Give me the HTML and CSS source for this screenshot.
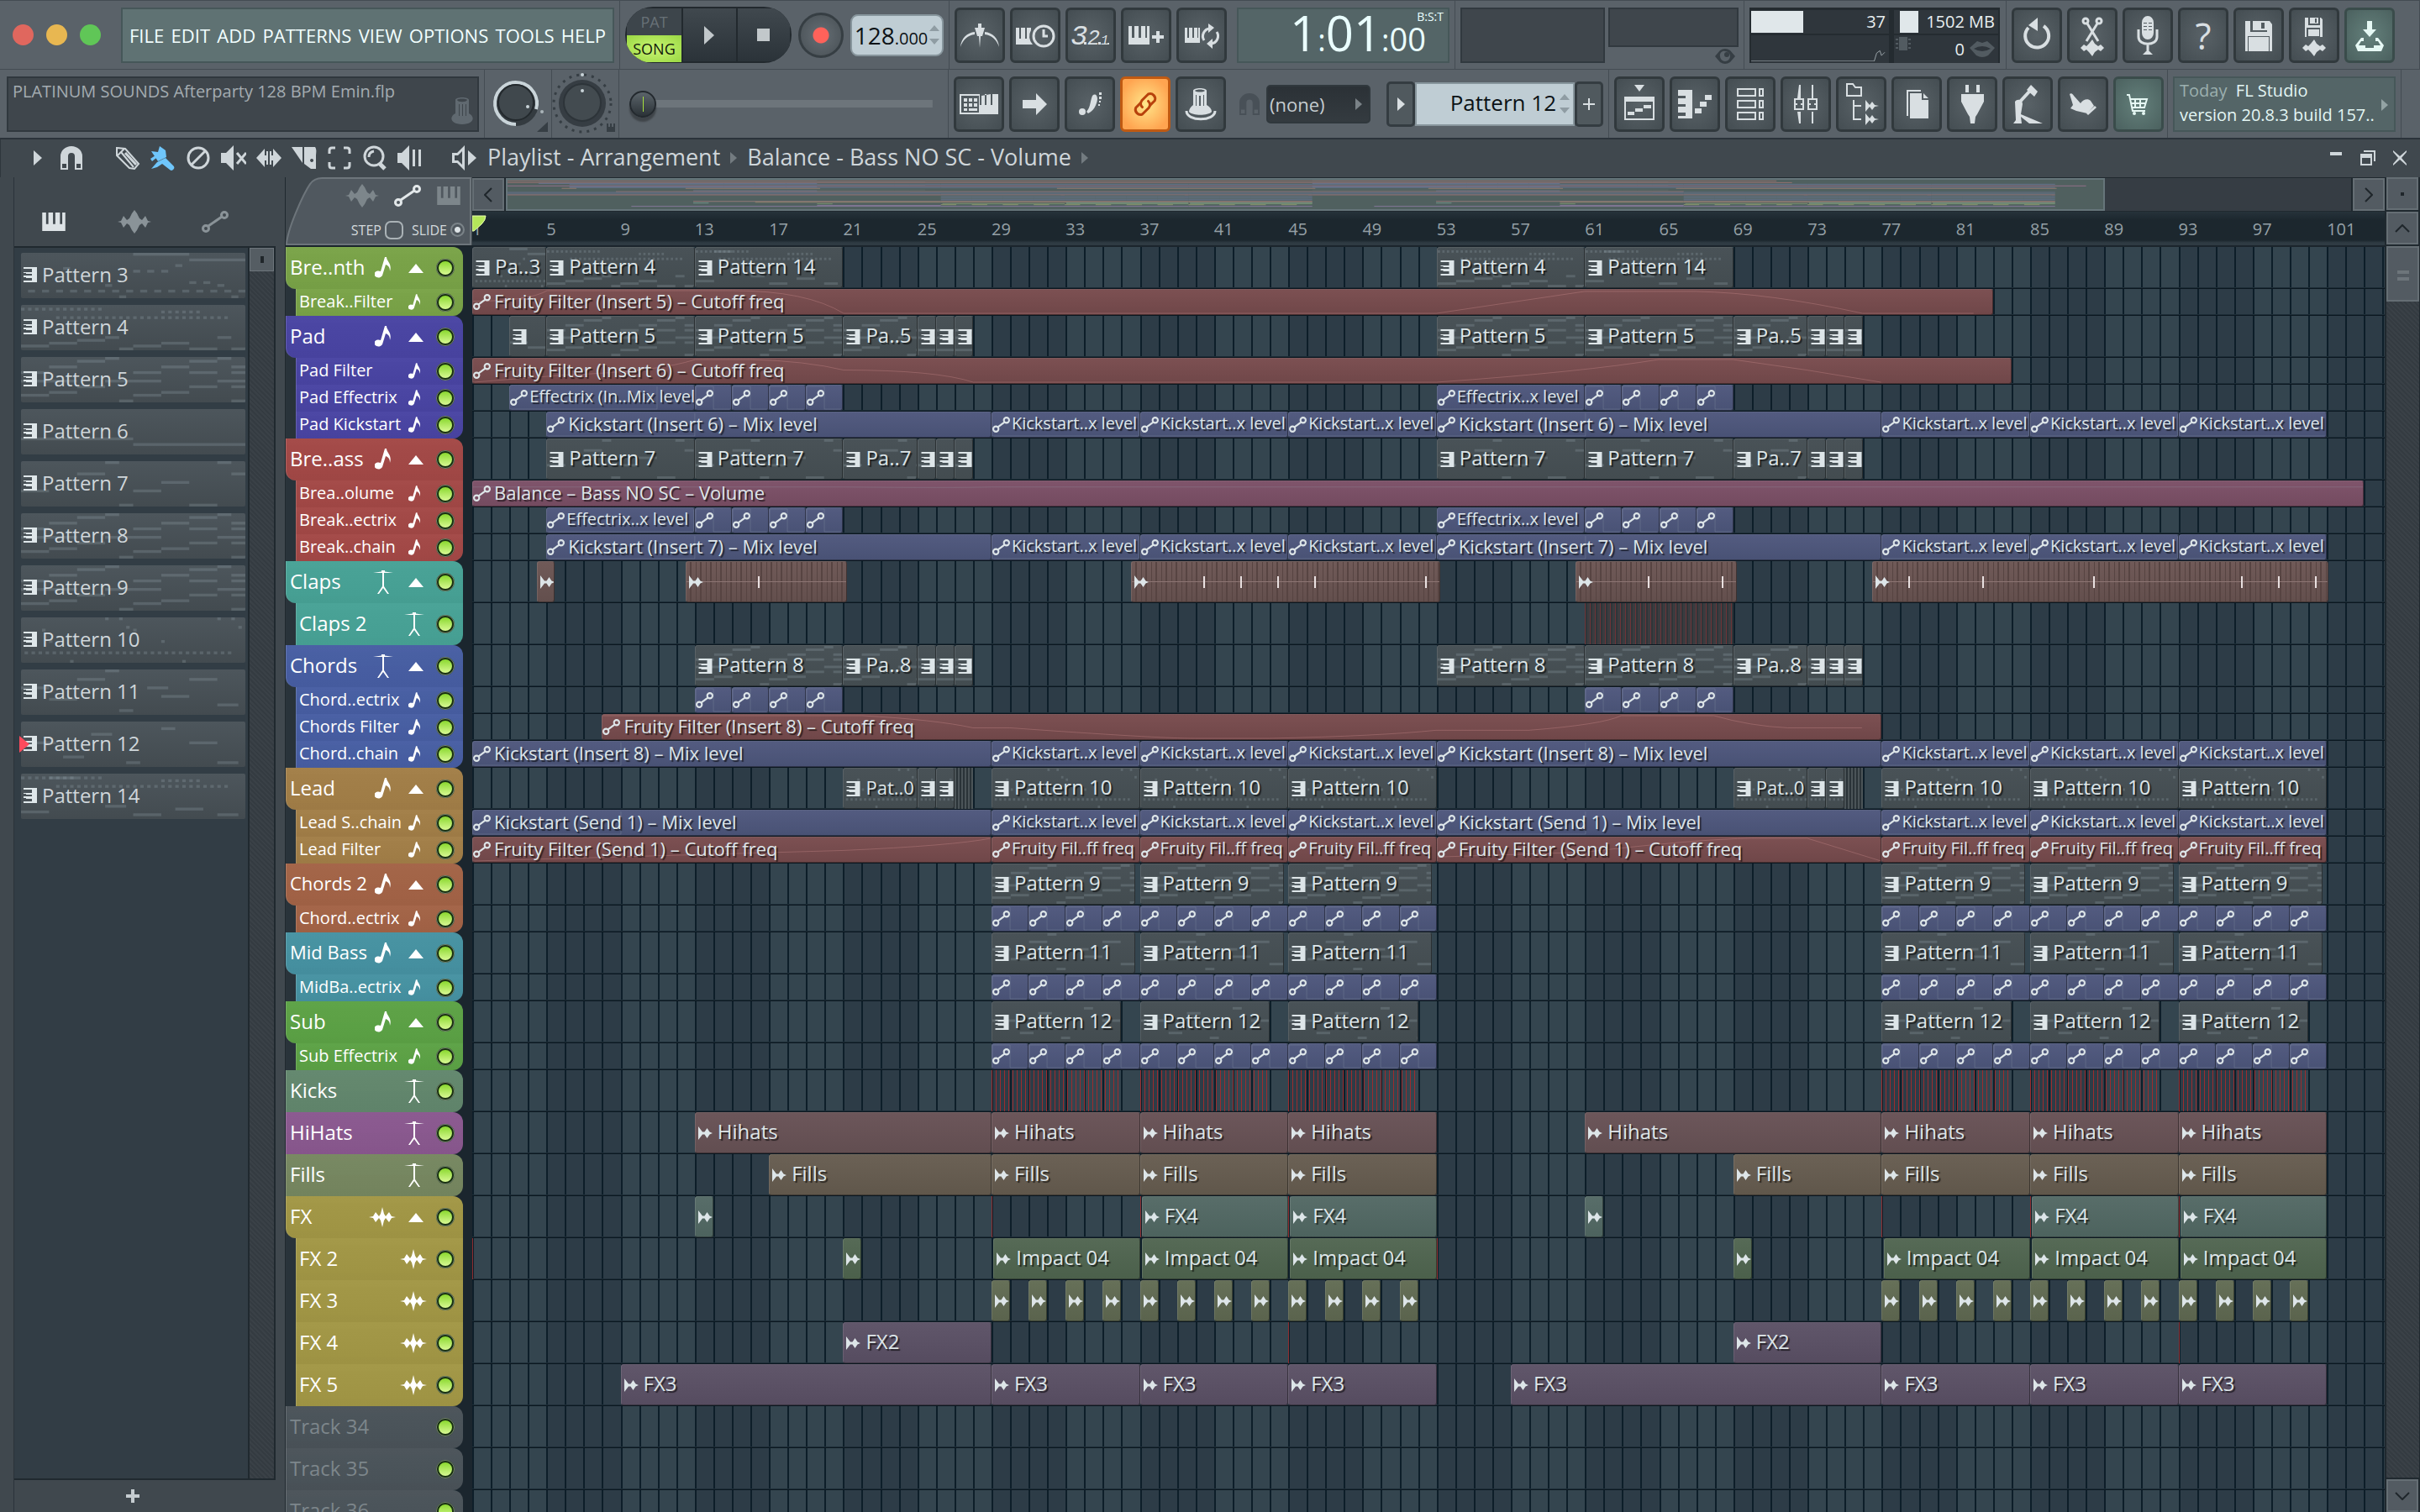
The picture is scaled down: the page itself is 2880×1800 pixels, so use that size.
FILE: index.html
```html
<!DOCTYPE html>
<html lang="en">
<head>
	<meta charset="UTF-8">
	<title>Playlist - Arrangement</title>
	<link rel="stylesheet" href="styles.css">
</head>
<body>
	<svg class="sprite" aria-hidden="true">
		<symbol id="piano" viewBox="0 0 30 24"><path d="M0 0h5v15h3V0h6v15h3V0h6v15h3V0h4v24H0z"/></symbol>
		<symbol id="keys" viewBox="0 0 16 18"><path d="M0 0h16v18H0v-2h10v-3H3v-1H0v-2h10V8H3V7H0V6h10V2H0z"/></symbol>
		<symbol id="wave" viewBox="0 0 40 28"><path d="M0 14l4-1 3-6 4 5 3-2 3-6 3-4 3 4 3 6 3 2 4-5 3 6 4 1-4 1-3 6-4-5-3 2-3 6-3 4-3-4-3-6-3-2-4 5-3-6z"/></symbol>
		<symbol id="sample" viewBox="0 0 17 16"><path d="M0 0l5 6.500h2.500L10.500 2l3 4.500 3.500 1.500-3.500 1.500-3 4.500-3-4.500H5L0 16z"/></symbol>
		<symbol id="spark" viewBox="0 0 32 24"><path d="M0 12l5-1 3-5 4 5 2-3 2-8 2 8 2 3 4-5 3 5 5 1-5 1-3 5-4-5-2 3-2 8-2-8-2-3-4 5-3-5z"/></symbol>
		<symbol id="auto" viewBox="0 0 32 28"><g fill="none" stroke="currentColor" stroke-width="3"><circle cx="5" cy="22" r="3.500"/><circle cx="27" cy="6" r="3.500"/><path d="M8 19L24 8"/></g></symbol>
		<symbol id="autoclip" viewBox="0 0 20 20"><g fill="none" stroke="currentColor" stroke-width="2"><circle cx="4" cy="15" r="3"/><circle cx="16" cy="5" r="3"/><path d="M6 13l8-6"/></g></symbol>
		<symbol id="note" viewBox="0 0 20 26"><path d="M12 0h2c0 5 7 8 4 17 0-5-2-7-5-8l-4 13a5 4 0 1 1-2-5z"/></symbol>
		<symbol id="drum" viewBox="0 0 24 28"><path d="M0 3l10-1.500V0h4v1.500L24 3H13v16l6 9h-2l-5-7-5 7H5l6-9V3z"/></symbol>
		<symbol id="magnet" viewBox="0 0 26 28"><path fill-rule="evenodd" d="M0 28V12a13 12 0 0 1 26 0v16h-9V12a4 4 0 0 0-8 0v16zm2-7v5h5v-5zm17 0v5h5v-5z"/></symbol>

		<symbol id="metronome" viewBox="0 0 60 66"><path d="M7 47c1-11 8-17 17-18v3C16 33 10 38 7 47zm46 0c-1-11-8-17-17-18v3c8 1 14 6 17 15zM24 24h4v-5h4v5h4l-3 10h-2l-1 14-1-14h-2z"/></symbol>
		<symbol id="wait" viewBox="0 0 60 66"><path d="M7 24h4v13h2V24h5v13h2V24h5v3a14 14 0 0 0 2 17H7z"/><g fill="none" stroke="currentColor" stroke-width="3"><circle cx="40" cy="34" r="12"/><path d="M40 26v8h5"/></g></symbol>
		<symbol id="count" viewBox="0 0 60 66"><g font-family="Liberation Mono, monospace" font-style="italic"><text x="6" y="44" font-size="34">3</text><text x="26" y="44" font-size="25">2</text><text x="42" y="44" font-size="16">1</text></g><path d="M22 41h3v3h-3zM39 41h3v3h-3zM50 42h2v2h-2z"/></symbol>
		<symbol id="stepedit" viewBox="0 0 60 66"><path d="M9 22h4v14h3V22h5v14h3V22h5v14h2V22h3v22H9zM42 28h4v5h5v4h-5v5h-4v-5h-5v-4h5z"/></symbol>
		<symbol id="loop" viewBox="0 0 60 66"><path d="M10 24h3v12h2V24h4v12h2V24h4v12h1V24h2v18H10z"/><path fill="none" stroke="currentColor" stroke-width="3" d="M33 39a9 9 0 0 1 7-14M48 29a9 9 0 0 1-7 14"/><path d="M38 19l7 5-7 6zM43 37l-7 6 7 6z"/></symbol>
		<symbol id="typing" viewBox="0 0 60 66"><path fill-rule="evenodd" d="M7 21h46v24H7zm2 2v20h21V23zm24 0v11h-2V21h8v13h-2V21h9v13h-2V21z"/><path d="M12 26h4v4h-4zm6 0h4v4h-4zm6 0h4v4h-4zM12 32h4v4h-4zm6 0h4v4h-4zm6 0h4v4h-4zM12 38h4v3h-4zm6 0h10v3H18z"/></symbol>
		<symbol id="arrow" viewBox="0 0 60 66"><path d="M16 28h16v-8l13 13-13 13v-8H16z"/></symbol>
		<symbol id="foot" viewBox="0 0 60 66"><circle cx="21" cy="42" r="4"/><path d="M33 23c3-3 6-1 6 4-1 8-5 14-11 17l-2-2c5-6 4-11 7-19z"/><path d="M41 19h3v3h-3zM41 24h3v3h-3zM41 29h2v2h-2zM40 33h2v2h-2z"/></symbol>
		<symbol id="link" viewBox="0 0 60 66"><g fill="none" stroke="currentColor" stroke-width="3" stroke-linecap="round" transform="rotate(-45 30 33)"><path d="M27 28h-8a6 6 0 0 0 0 11h11a6 6 0 0 0 5-6"/><path d="M33 38h8a6 6 0 0 0 0-11H30a6 6 0 0 0-5 6"/></g></symbol>
		<symbol id="knobcap" viewBox="0 0 60 66"><path fill-rule="evenodd" d="M21 17c0-4 16-4 16 0v17c4 2 6 5 6 8-4 5-23 5-27 0 0-3 2-6 5-8zm2 0c2 2 10 2 12 0-2-2-10-2-12 0zm1 5v13h1V22zm4 1v12h2V23zm5-1v13h1V22z"/><path fill="none" stroke="currentColor" stroke-width="3" d="M13 41c0 13 34 13 34 0"/></symbol>
		<symbol id="playlist" viewBox="0 0 60 66"><path d="M24 10h12l-6 8z"/><path fill-rule="evenodd" d="M12 24h36v28H12zm2 6v20h32V30z"/><path d="M16 42h8v4h-8zM25 38h9v4h-9zM35 34h9v4h-9z"/></symbol>
		<symbol id="roll" viewBox="0 0 60 66"><path d="M10 16h17v34H10v-3h9v-4h-9v-7h9v-3h-9v-7h9v-3h-9zM30 38h8v6h-8zM36 30h8v6h-8zM42 22h8v6h-8z"/></symbol>
		<symbol id="rack" viewBox="0 0 60 66"><g fill="none" stroke="currentColor" stroke-width="2"><path d="M15 15h21v8H15zM41 15h4v8h-4zM15 29h21v8H15zM41 29h4v8h-4zM15 43h21v8H15zM41 43h4v8h-4z"/></g></symbol>
		<symbol id="mixer" viewBox="0 0 60 66"><path d="M22 10h2v16h-4zM20 42h4v14h-2zM37 10h2v16h-2zM37 42h2v14h-2z"/><path fill="none" stroke="currentColor" stroke-width="2" d="M17 27h10v12H17zM33 27h10v12H33zM17 33h3m4 0h3m6 0h3m4 0h3"/></symbol>
		<symbol id="browser" viewBox="0 0 60 66"><path fill="none" stroke="currentColor" stroke-width="2" d="M13 9h7l3 4h7v10H13zM21 28v23h9M21 35h9"/><path d="M35 28l5 6 3-4 3 4 5 1-5 1-3 4-3-4-5 6zM35 44l5 6 3-4 3 4 5 1-5 1-3 4-3-4-5 6z"/></symbol>
		<symbol id="copy" viewBox="0 0 60 66"><path d="M22 20h14v8h8v22H22zM38 20l6 6h-6z"/><path fill="none" stroke="currentColor" stroke-width="2" d="M35 17H19v30"/></symbol>
		<symbol id="plug" viewBox="0 0 60 66"><path d="M22 10h4v9h-4zM35 10h4v9h-4zM17 21h27v9l-8 15-2 3-1 8h-5l-1-8-2-3-8-15z"/></symbol>
		<symbol id="hammer" viewBox="0 0 60 66"><path d="M34 10l8 8-4 6-9-8z"/><path fill="none" stroke="currentColor" stroke-width="4" d="M32 18L21 30"/><path d="M15 30c3-4 9-2 9 3l-2 12 26 11H32L22 48l1 8H13l3-4z"/></symbol>
		<symbol id="hand" viewBox="0 0 60 66"><path d="M14 21c2-2 4 0 5 2l8 9c3-5 9-6 12-3l4 6-8 9-13-3-7-3 3-4z"/><path fill="none" stroke="currentColor" stroke-width="3" d="M45 36l-10 9"/></symbol>
		<symbol id="cart" viewBox="0 0 60 66"><path fill="none" stroke="currentColor" stroke-width="2" d="M16 22h3l4 19h15M20 27h20l-3 10H22M21 32h18M26 27v10M32 27v10"/><circle cx="25" cy="44" r="2"/><circle cx="36" cy="44" r="2"/></symbol>
		<symbol id="undo" viewBox="0 0 60 66"><path fill="none" stroke="currentColor" stroke-width="4" d="M20 24a14 14 0 1 0 18-2"/><path d="M31 12v16l-11-7z"/></symbol>
		<symbol id="scissors" viewBox="0 0 60 66"><g fill="none" stroke="currentColor" stroke-width="3"><circle cx="22" cy="16" r="3"/><circle cx="38" cy="16" r="3"/><path d="M24 19l13 21M36 19L23 40"/></g><path d="M16 48l4-4 3 2 3-3 4-5 3 5 4 3 3-2 4 4-4 4-3-2-4 3-3 5-4-5-3-3-3 2z"/></symbol>
		<symbol id="mic" viewBox="0 0 60 66"><path fill-rule="evenodd" d="M23 18a7 8 0 0 1 14 0v12a7 8 0 0 1-14 0zm2 0v1h4v-1zm6 0v1h4v-1zm-6 4v1h4v-1zm6 0v1h4v-1zm-6 4v1h4v-1zm6 0v1h4v-1z"/><path fill="none" stroke="currentColor" stroke-width="3" d="M19 26v9c0 11 22 11 22 0v-9M30 43v10"/><path d="M24 56l4-4h4l4 4z"/></symbol>
		<symbol id="save" viewBox="0 0 60 66"><path fill-rule="evenodd" d="M14 16h6v13h20V16h3l3 4v32H14zm3 18v18h26V34zM23 16h17v11H23zm10 2v7h4v-7z"/><path d="M18 35h24v17H18z"/></symbol>
		<symbol id="savewave" viewBox="0 0 60 66"><path fill-rule="evenodd" d="M19 12h4v9h14v-9h1l2 2v21H19zm2 12v11h16V24zM25 12h10v7H25zm6 1v5h2v-5z"/><path d="M23 26h13v8H23zM16 48l4-4 3 2 3-3 4-5 3 5 4 3 3-2 4 4-4 4-3-2-4 3-3 5-4-5-3-3-3 2z"/></symbol>
		<symbol id="download" viewBox="0 0 60 66"><path d="M27 16h6v10h5l-8 9-8-9h5zM13 45l7-9h3v4h-3l-3 5h8v3h10v-3h8l-3-5h-3v-4h3l7 9-3 7H16z"/></symbol>
	</svg>

	<header class="toolbar">
		<div class="bar">
			<div class="cell cell-main">
				<div class="lights"><i class="light red"></i><i class="light yellow"></i><i class="light green"></i></div>
				<nav class="menu">
					<button>FILE</button><button>EDIT</button><button>ADD</button><button>PATTERNS</button><button>VIEW</button><button>OPTIONS</button><button>TOOLS</button><button>HELP</button>
				</nav>
			</div>
			<div class="cell cell-transport">
				<div class="transport">
					<div class="mode"><button class="pat">PAT</button><button class="song">SONG</button></div>
					<button class="key" aria-label="Play"><svg width="12" height="22" viewBox="0 0 12 22"><path d="M0 0l12 11L0 22z"/></svg></button>
					<button class="key last" aria-label="Stop"><svg width="15" height="15" viewBox="0 0 15 15"><path d="M0 0h15v15H0z"/></svg></button>
				</div>
				<button class="record" aria-label="Record"></button>
				<button class="tempo"><span>128<small>.000</small></span><svg class="updown" viewBox="0 0 12 24"><path d="M0 7l6-7 6 7zM0 16h12l-6 7z"/></svg></button>
			</div>
			<div class="cell cell-time">
				<button class="tool" aria-label="Metronome"><svg><use href="#metronome"/></svg></button>
				<button class="tool" aria-label="Wait for input"><svg><use href="#wait"/></svg></button>
				<button class="tool" aria-label="Countdown"><svg><use href="#count"/></svg></button>
				<button class="tool" aria-label="Step edit"><svg><use href="#stepedit"/></svg></button>
				<button class="tool" aria-label="Loop recording"><svg><use href="#loop"/></svg></button>
				<div class="clock"><span class="digits">1<i>:</i>01<i>:</i><small>00</small></span><span class="unit">B:S:T</span></div>
			</div>
			<div class="cell cell-scope">
				<div class="scope wide"></div>
				<div class="scope-side">
					<div class="scope"></div>
					<svg class="eye" viewBox="0 0 24 18"><path fill-rule="evenodd" d="M0 9l6-7q6-4 12 0l6 7-6 7q-6 4-12 0zm6 0a6 6 0 0 0 12 0 6 6 0 0 0-6-6 5 5 0 0 0-6 6z"/><circle cx="14" cy="7" r="3"/></svg>
				</div>
			</div>
			<div class="cell cell-cpu">
				<div class="meter">
					<div class="load"><span class="fill"></span><b>37</b></div>
					<div class="graph"><svg viewBox="0 0 166 32"><path d="M0 31h152l3-10 4-3 2 6 4-4" fill="none" stroke="#9ca6ab"/></svg></div>
				</div>
				<div class="meter memory">
					<div class="load"><span class="fill small"></span><b>1502 MB</b></div>
					<div class="voices"><svg class="chip" viewBox="0 0 18 16"><path d="M4 0h10v16H4zM0 2h3v2H0zM0 7h3v2H0zM0 12h3v2H0zM15 2h3v2h-3zM15 7h3v2h-3zM15 12h3v2h-3z"/></svg><b>0</b><svg class="lips" viewBox="0 0 30 20"><path fill-rule="evenodd" d="M0 9l9-8 6 2 6-2 9 8-8 9q-7 4-14 0zm5 1q10-6 20 0-10 6-20 0z"/></svg></div>
				</div>
			</div>
			<div class="cell cell-files">
				<button class="tool" aria-label="Undo"><svg><use href="#undo"/></svg></button>
				<button class="tool" aria-label="Cut"><svg><use href="#scissors"/></svg></button>
				<button class="tool" aria-label="Record audio"><svg><use href="#mic"/></svg></button>
				<button class="tool help" aria-label="Help">?</button>
				<button class="tool" aria-label="Save"><svg><use href="#save"/></svg></button>
				<button class="tool" aria-label="Render"><svg><use href="#savewave"/></svg></button>
				<button class="tool teal" aria-label="Download"><svg><use href="#download"/></svg></button>
			</div>
		</div>
		<div class="bar">
			<div class="cell cell-hint">
				<div class="hint">PLATINUM SOUNDS Afterparty 128 BPM Emin.flp<svg class="hint-knob" viewBox="0 0 26 32"><path fill-rule="evenodd" d="M5 3c0-4 16-4 16 0v16c8 4 6 13-8 13S-3 23 5 19zm2 0c1 3 11 3 12 0-1-2-11-2-12 0zm2 5v14h1V8zm4 0v14h1V8zm4 0v14h1V8z"/></svg></div>
			</div>
			<div class="cell cell-knob">
				<svg class="knob" viewBox="0 0 80 81" role="img" aria-label="Main volume"><circle cx="37" cy="40" r="27" fill="#343b40"/><path d="M37 65A25 25 0 1 1 61 47" fill="none" stroke="#c9d4d9" stroke-width="4"/><circle cx="37" cy="39" r="21" fill="#40484d" stroke="#23292d" stroke-width="2"/><circle cx="51" cy="44" r="2" fill="#c9d4d9"/><circle cx="68" cy="50" r="2" fill="#aab4b9"/><path d="M75 62v12H62z" fill="#363e44"/></svg>
			</div>
			<div class="cell cell-knob">
				<svg class="knob" viewBox="0 0 80 81" role="img" aria-label="Main pitch"><circle cx="36" cy="40" r="34" fill="none" stroke="#363e44" stroke-width="3" stroke-dasharray="3 6"/><circle cx="36" cy="40" r="28" fill="#363d43"/><circle cx="36" cy="39" r="22" fill="#434b50" stroke="#2d3439" stroke-width="2"/><circle cx="36" cy="25" r="2" fill="#c9d4d9"/><circle cx="36" cy="6" r="2" fill="#c9d4d9"/><path d="M65 64h2v4h2v-4h2v4h2v-4h2v10H65z" fill="#363e44"/></svg>
			</div>
			<div class="cell cell-slide">
				<input type="range" class="position" min="0" max="100" value="0" aria-label="Song position">
			</div>
			<div class="cell cell-pattern">
				<button class="tool" aria-label="Typing keyboard"><svg><use href="#typing"/></svg></button>
				<button class="tool" aria-label="Step"><svg><use href="#arrow"/></svg></button>
				<button class="tool" aria-label="Footprint"><svg><use href="#foot"/></svg></button>
				<button class="tool hot" aria-label="Multilink"><svg><use href="#link"/></svg></button>
				<button class="tool" aria-label="Knob"><svg><use href="#knobcap"/></svg></button>
				<svg class="snap-icon"><use href="#magnet"/></svg>
				<label class="snap"><select aria-label="Snap"><option>(none)</option></select><svg width="8" height="14" viewBox="0 0 8 14"><path d="M0 0l8 7-8 7z"/></svg></label>
				<div class="picker">
					<button class="mini" aria-label="Previous pattern"><svg width="9" height="16" viewBox="0 0 9 16"><path d="M0 0l9 8-9 8z"/></svg></button>
					<label class="pattern-box"><input type="text" value="Pattern 12" aria-label="Pattern"><svg class="updown" viewBox="0 0 12 24"><path d="M0 7l6-7 6 7zM0 16h12l-6 7z"/></svg></label>
					<button class="mini" aria-label="New pattern"><svg width="14" height="14" viewBox="0 0 14 14"><path d="M6 0h2v6h6v2H8v6H6V8H0V6h6z"/></svg></button>
				</div>
			</div>
			<div class="cell cell-windows">
				<button class="tool" aria-label="Playlist"><svg><use href="#playlist"/></svg></button>
				<button class="tool" aria-label="Piano roll"><svg><use href="#roll"/></svg></button>
				<button class="tool" aria-label="Channel rack"><svg><use href="#rack"/></svg></button>
				<button class="tool" aria-label="Mixer"><svg><use href="#mixer"/></svg></button>
				<button class="tool" aria-label="Browser"><svg><use href="#browser"/></svg></button>
				<button class="tool" aria-label="Project picker"><svg><use href="#copy"/></svg></button>
				<button class="tool" aria-label="Plugins"><svg><use href="#plug"/></svg></button>
				<button class="tool" aria-label="Tempo tapper"><svg><use href="#hammer"/></svg></button>
				<button class="tool" aria-label="Touch"><svg><use href="#hand"/></svg></button>
				<button class="tool teal" aria-label="Shop"><svg><use href="#cart"/></svg></button>
			</div>
			<div class="cell cell-news">
				<a class="news" href="#"><span><em>Today</em>&nbsp; FL Studio</span><span>version 20.8.3 build 157..</span><svg class="news-next" width="8" height="14" viewBox="0 0 8 14"><path d="M0 0l8 7-8 7z"/></svg></a>
			</div>
			<div class="cell cell-end"></div>
		</div>
	</header>

	<main class="window">
		<div class="titlebar">
			<div class="title-tools">
				<button aria-label="Options"><svg width="10" height="18" viewBox="0 0 10 18"><path d="M0 0l10 9-10 9z"/></svg></button>
				<button aria-label="Snap"><svg width="26" height="28"><use href="#magnet"/></svg></button>
			</div>
			<div class="edit-tools">
				<button aria-label="Draw"><svg viewBox="0 0 30 30"><g fill="none" stroke="currentColor" stroke-width="2"><path d="M2 3l10 1 16 18-5 6-6-1L2 12zM3 12l8-8M7 8l15 18"/><path stroke-width="3" d="M12 9l13 14"/></g></svg></button>
				<button class="active" aria-label="Paint"><svg viewBox="0 0 30 30"><path d="M1 7l8 1 2-7 7 5 1 8-10 5zM8 20l10-5 9 9a3 3 0 0 1-4 5l-9-7-6 4-7 2zM0 16l6-4 1 3-5 4z"/></svg></button>
				<button aria-label="Delete"><svg viewBox="0 0 30 30"><g fill="none" stroke="currentColor" stroke-width="3"><circle cx="15" cy="15" r="12"/><path d="M23 7L7 23"/></g></svg></button>
				<button aria-label="Mute"><svg viewBox="0 0 30 30"><path d="M0 9h6l9-9v30l-9-9H0z"/><path d="M19 9l11 13M30 9L19 22" fill="none" stroke="currentColor" stroke-width="3"/></svg></button>
				<button aria-label="Slip"><svg viewBox="0 0 30 30"><path d="M0 15L10 4v8h2V7h2v16h-2v-5h-2v8zm30 0L20 4v8h-2V7h-2v16h2v-5h2v8z"/></svg></button>
				<button aria-label="Slice"><svg viewBox="0 0 30 30"><path fill-rule="evenodd" d="M0 2h13v19zm15 0h13q2 2 1 10v16h-6l-8-6zm9 14a2 2 0 1 0 .1 0z"/></svg></button>
				<button aria-label="Select"><svg viewBox="0 0 30 30"><path fill="none" stroke="currentColor" stroke-width="3" d="M3 10V6q0-3 3-3h4M20 3h4q3 0 3 3v4M27 20v4q0 3-3 3h-4M10 27H6q-3 0-3-3v-4"/></svg></button>
				<button aria-label="Zoom"><svg viewBox="0 0 30 30"><g fill="none" stroke="currentColor"><circle cx="14" cy="13" r="11" stroke-width="3"/><path d="M21 22l6 6" stroke-width="5"/><path d="M8 14q0-6 6-7" stroke-width="3"/></g></svg></button>
				<button aria-label="Playback"><svg viewBox="0 0 30 30"><path d="M0 9h5l9-9v30l-9-9H0zM18 5h3v20h-3zM25 5h3v20h-3z"/></svg></button>
			</div>
			<h1 class="crumbs">
				<svg width="30" height="30" viewBox="0 0 30 30"><path fill-rule="evenodd" d="M0 9h6l9-9v30l-9-9H0zm3 3v6h4l5 5V7l-5 5z"/><path d="M19 6l10 9-10 9z"/></svg>
				<span>Playlist - Arrangement</span><i class="sep"></i><span>Balance - Bass NO SC - Volume</span><i class="sep"></i>
			</h1>
			<div class="window-buttons">
				<button aria-label="Minimize"><svg viewBox="0 0 18 18"><path d="M2 2h14v4H2z"/></svg></button>
				<button aria-label="Restore"><svg viewBox="0 0 18 18"><path fill-rule="evenodd" d="M0 4h14v14H0zm2 5v7h10V9zM4 0h14v13h-2V2H4z"/></svg></button>
				<button aria-label="Close"><svg viewBox="0 0 18 18"><path d="M1 0l8 7 8-7v2l-6 7 6 7v2l-8-7-8 7v-2l6-7-6-7z"/></svg></button>
			</div>
		</div>
		<div class="work">
			<aside class="picker-panel">
				<div class="tabs">
					<button class="on" aria-label="Patterns"><svg width="30" height="22"><use href="#piano"/></svg></button>
					<button aria-label="Audio"><svg width="40" height="28"><use href="#wave"/></svg></button>
					<button aria-label="Automation"><svg width="32" height="28"><use href="#auto"/></svg></button>
				</div>
				<div class="pattern-area">
					<ul class="patterns" id="patterns"></ul>
					<div class="side-scroll"><div class="side-thumb"></div></div>
				</div>
				<button class="add" aria-label="Add"><svg width="16" height="16" viewBox="0 0 16 16"><path d="M6 0h4v6h6v4h-6v6H6v-6H0V6h6z"/></svg></button>
			</aside>
			<section class="playlist">
				<div class="play-head">
					<div class="corner">
						<svg class="corner-shape" viewBox="0 0 221 80" preserveAspectRatio="none"><path d="M1 79C2 60 22 18 29 8q5-7 14-7h177v78z"/></svg>
						<div class="corner-icons"><svg width="40" height="28"><use href="#wave"/></svg><svg class="on" width="32" height="28"><use href="#auto"/></svg><svg width="30" height="22"><use href="#piano"/></svg></div>
						<div class="corner-checks"><label>STEP<input type="checkbox"></label><label>SLIDE<input type="radio" checked></label></div>
					</div>
					<div class="head-right">
						<div class="overview">
							<button class="scroll-btn" aria-label="Scroll left"><svg viewBox="0 0 10 18"><path d="M9 1L1 9l8 8"/></svg></button>
							<div class="overview-track"><svg class="overview-map" id="overview" preserveAspectRatio="none"></svg></div>
							<button class="scroll-btn" aria-label="Scroll right"><svg viewBox="0 0 10 18"><path d="M1 1l8 8-8 8"/></svg></button>
						</div>
						<div class="ruler" id="ruler"><svg class="marker" width="17" height="20" viewBox="0 0 17 20"><path d="M0 1h16q0 5-5 10l-9 8H0z" fill="#b4e65a" stroke="#eaffb0"/></svg></div>
					</div>
				</div>
				<div class="tracks">
					<div class="heads" id="heads"></div>
					<div class="lanes" id="lanes"></div>
				</div>
			</section>
			<div class="vscroll">
				<button class="dot" aria-label="Zoom"></button>
				<button aria-label="Scroll up"><svg width="18" height="10" viewBox="0 0 18 10"><path d="M1 9l8-8 8 8"/></svg></button>
				<div class="vtrack"><div class="vthumb"></div></div>
				<button aria-label="Scroll down"><svg width="18" height="10" viewBox="0 0 18 10"><path d="M1 1l8 8 8-8"/></svg></button>
			</div>
		</div>
	</main>
	<script src="script.js"></script>
</body>
</html>
```

FILE: styles.css
```css
* {
	box-sizing: border-box;
}
body {
	margin: 0;
	height: 100vh;
	display: flex;
	flex-direction: column;
	overflow: hidden;
	background: #40484e;
	color: #cfd6da;
	font-family: "Open Sans", "Noto Sans", sans-serif;
	font-size: 24px;
}
button {
	font: inherit;
	color: inherit;
	background: none;
	border: none;
	padding: 0;
	display: flex;
	align-items: center;
	justify-content: center;
}
svg {
	fill: currentColor;
	flex-shrink: 0;
	display: block;
}
.sprite {
	display: none;
}

/* toolbar */
.toolbar {
	background: #5a6269;
	border-bottom: 2px solid #2b333a;
}
.bar {
	display: flex;
	height: 82px;
	border-top: 1px solid #444c53;
}
.cell {
	display: flex;
	align-items: center;
	padding: 0 6px;
	gap: 6px;
	border-right: 1px solid #444c53;
}
.cell-main { width: 738px; padding-left: 15px; }
.cell-transport { width: 392px; gap: 8px; }
.cell-time { width: 602px; }
.cell-scope { width: 344px; gap: 4px; }
.cell-cpu { width: 312px; gap: 0; }
.cell-files { flex: 1; }
.cell-hint { width: 578px; padding-left: 8px; }
.cell-knob { width: 80px; padding: 0; }
.cell-slide { width: 392px; padding: 0 18px 0 12px; }
.cell-pattern { width: 786px; }
.cell-windows { width: 665px; }
.cell-news { flex: 1; }
.cell-end { width: 22px; border: none; }
.lights {
	display: flex;
	gap: 15px;
	margin-right: 18px;
}
.light {
	width: 25px;
	height: 25px;
	border-radius: 50%;
}
.light.red { background: #e0675e; }
.light.yellow { background: #e8b751; }
.light.green { background: #60c657; }
.menu {
	flex: 1;
	height: 66px;
	padding: 0 8px;
	display: flex;
	align-items: center;
	justify-content: space-between;
	background: #5f7273;
	border: 2px solid #465759;
	color: #f2ffff;
	font-size: 22px;
}
.transport {
	display: flex;
	gap: 2px;
	width: 198px;
	height: 67px;
	padding: 2px;
	border-radius: 33px;
	overflow: hidden;
	background: #22292e;
}
.mode {
	width: 65px;
	font-size: 18px;
	line-height: 24px;
}
.mode button {
	width: 100%;
	height: 32px;
	background: #3d454b;
	color: #687177;
}
.mode .song {
	background: radial-gradient(#c9f573, #9ad843);
	color: #10180a;
}
.key {
	flex: 1;
	background: linear-gradient(#40484e, #2b3339);
	color: #c2c8cb;
}
.record {
	width: 54px;
	height: 54px;
	border-radius: 50%;
	border: 3px solid #363e43;
	background: radial-gradient(#ff625a 9px, #5d656b 10px, #474f54);
}
.tempo {
	width: 111px;
	height: 50px;
	border: 2px solid #87959c;
	border-radius: 9px;
	background: #bfcdd4;
	color: #0c1216;
	font-size: 28px;
	gap: 2px;
}
.tempo small {
	font-size: 20px;
}
.updown {
	width: 12px;
	height: 24px;
	color: #8f9ca3;
}
.tool {
	width: 60px;
	height: 66px;
	border: 3px solid #31393d;
	border-radius: 6px;
	background: radial-gradient(#596267, #444d52);
	color: #d9dfe2;
}
.tool svg {
	width: 60px;
	height: 66px;
}
.tool.help {
	font-size: 44px;
}
.tool.teal {
	background: radial-gradient(#64807b, #4b615f);
	border-color: #3a4c4b;
	color: #e6f8f4;
}
.tool.hot {
	background: radial-gradient(#ffe68a, #ffa450 80%);
	border-color: #c05a12;
	color: #b8420c;
}
.clock {
	position: relative;
	width: 258px;
	height: 66px;
	margin-left: 6px;
	padding: 4px 26px 0 0;
	background: #546567;
	border: 2px solid #465759;
	color: #eaffff;
	display: flex;
	align-items: center;
	justify-content: flex-end;
}
.digits {
	font-size: 58px;
	line-height: 58px;
}
.digits i {
	font-style: normal;
	font-size: 36px;
}
.digits small {
	font-size: 38px;
}
.unit {
	position: absolute;
	top: -1px;
	right: 5px;
	font-size: 14px;
}
.scope {
	height: 66px;
	background: #3f464c;
	border: 2px solid #31393f;
}
.scope.wide {
	width: 172px;
}
.scope-side {
	flex: 1;
	height: 66px;
}
.scope-side .scope {
	height: 47px;
}
.eye {
	width: 24px;
	height: 18px;
	margin: 2px 4px 0 auto;
	color: #363e44;
}
.meter {
	width: 168px;
	height: 66px;
	background: #242b30;
	padding: 3px 2px 0;
	color: #e8eef0;
	font-size: 20px;
}
.meter.memory {
	width: 130px;
	padding-left: 4px;
}
.meter b {
	font-weight: 400;
	margin-left: auto;
}
.load, .voices, .graph {
	height: 28px;
	display: flex;
	align-items: center;
	background: #2f363c;
	padding-right: 4px;
}
.voices, .graph {
	height: 33px;
	margin-top: 2px;
}
.voices {
	gap: 6px;
}
.fill {
	width: 62px;
	height: 26px;
	background: #e0e7ea;
}
.fill.small {
	width: 22px;
	margin-left: 7px;
}
.chip {
	width: 18px;
	height: 16px;
	align-self: flex-start;
	margin: 2px;
	color: #525b61;
}
.lips {
	width: 30px;
	height: 20px;
	color: #525b61;
}
.hint {
	position: relative;
	width: 100%;
	height: 66px;
	padding: 2px 5px;
	background: #3f464c;
	border: 2px solid #30383e;
	color: #a4acb1;
	font-size: 20px;
}
.hint-knob {
	position: absolute;
	right: 5px;
	bottom: 7px;
	width: 26px;
	height: 32px;
	color: #606970;
}
.knob {
	width: 80px;
	height: 81px;
}
.position {
	appearance: none;
	width: 100%;
	height: 40px;
	margin: 0;
	background: linear-gradient(#6d757b, #6d757b) center / 100% 9px no-repeat;
}
.position::-webkit-slider-thumb {
	appearance: none;
	width: 32px;
	height: 32px;
	border-radius: 50%;
	border: 2px solid #23292e;
	background:
		linear-gradient(#a6e03c, #a6e03c) center / 1px 18px no-repeat,
		linear-gradient(#5b646a, #2b3237);
	box-shadow: 0 5px 2px rgba(0, 0, 0, .3);
}
.snap-icon {
	width: 24px;
	height: 26px;
	margin-left: 10px;
	color: #485057;
}
.snap {
	display: flex;
	align-items: center;
	width: 125px;
	height: 46px;
	margin-left: 2px;
	padding: 0 8px 0 2px;
	border: 2px solid #30383d;
	border-radius: 5px;
	background: linear-gradient(#2b3136, #343b40);
	color: #7a8287;
}
.snap select {
	appearance: none;
	flex: 1;
	min-width: 0;
	border: none;
	background: none;
	color: #c5ccd0;
	font: inherit;
	font-size: 22px;
}
.picker {
	display: flex;
	align-items: center;
	margin-left: 13px;
}
.mini {
	width: 34px;
	height: 54px;
	border: 3px solid #343c41;
	border-radius: 5px;
	background: #50595e;
	color: #d9dfe2;
}
.pattern-box {
	display: flex;
	align-items: center;
	width: 190px;
	height: 52px;
	padding-right: 4px;
	gap: 4px;
	border: 2px solid #87959c;
	background: #bfcdd4;
}
.pattern-box input {
	flex: 1;
	min-width: 0;
	height: 44px;
	border: none;
	padding: 0 0 4px;
	background: none;
	color: #0c1216;
	font: inherit;
	font-size: 26px;
	text-align: right;
}
.news {
	position: relative;
	width: 265px;
	height: 66px;
	padding: 0 6px;
	background: #546567;
	border: 2px solid #465759;
	color: #e3f6f4;
	font-size: 20px;
	line-height: 29px;
	text-decoration: none;
	white-space: nowrap;
}
.news span {
	display: block;
}
.news em {
	font-style: normal;
	color: #9cb0af;
}
.news-next {
	position: absolute;
	right: 7px;
	top: 25px;
	color: #93a3a4;
}

/* playlist window */
.window {
	flex: 1;
	min-height: 0;
	display: flex;
	flex-direction: column;
}
.titlebar {
	display: flex;
	align-items: center;
	height: 45px;
	padding: 0 15px 2px 39px;
	border-left: 1px solid #2f373d;
}
.title-tools, .edit-tools, .window-buttons {
	display: flex;
	align-items: center;
}
.title-tools {
	gap: 22px;
}
.edit-tools {
	gap: 12px;
	margin-left: 39px;
}
.edit-tools svg {
	width: 30px;
	height: 30px;
}
.edit-tools .active {
	color: #6fc6fb;
}
.crumbs {
	display: flex;
	align-items: center;
	gap: 12px;
	margin: 0 0 0 35px;
	font-size: 27px;
	font-weight: 400;
	line-height: 36px;
}
.crumbs span {
	padding-bottom: 2px;
}
.sep {
	border: 7px solid transparent;
	border-left: 8px solid #737b80;
	border-right: 0;
}
.window-buttons {
	gap: 20px;
	margin-left: auto;
}
.window-buttons svg {
	width: 18px;
	height: 18px;
}
.work {
	flex: 1;
	min-height: 0;
	display: flex;
}
.picker-panel {
	width: 312px;
	margin-left: 16px;
	border-left: 1px solid #2b333a;
	display: flex;
	flex-direction: column;
}
.tabs {
	height: 82px;
	padding: 24px 56px 0 32px;
	display: flex;
	align-items: center;
	justify-content: space-between;
	color: #8a9398;
}
.tabs .on {
	color: #dde3e6;
}
.pattern-area {
	flex: 1;
	min-height: 0;
	display: flex;
	border: 2px solid #20292f;
	border-left: 0;
}
.patterns {
	flex: 1;
	margin: 0;
	padding: 6px 3px 0 8px;
	list-style: none;
	background: #323d45;
	border-right: 2px solid #20292f;
}
.patterns li {
	position: relative;
	display: flex;
	align-items: center;
	height: 54px;
	margin-bottom: 8px;
	padding: 0 0 2px 3px;
	gap: 6px;
	border-radius: 2px;
	background: linear-gradient(#4d565c, #434b50);
}
.patterns .keys {
	position: relative;
	width: 16px;
	height: 18px;
	color: #dfe7ea;
}
.patterns span {
	position: relative;
	padding-bottom: 2px;
}
.playing {
	position: absolute;
	left: -2px;
	top: 17px;
	color: #ff4a5c;
}
.side-scroll {
	width: 29px;
	background: repeating-linear-gradient(45deg, #343b41 0 2px, #3a4147 2px 4px);
}
.side-thumb {
	height: 28px;
	border: 1px solid #6d757b;
	background: linear-gradient(#20262a, #20262a) center / 4px 8px no-repeat #555d63;
}
.add {
	height: 38px;
	padding-right: 30px;
	color: #c5ccd0;
}
.playlist {
	flex: 1;
	min-width: 0;
	margin-left: 11px;
	display: flex;
	flex-direction: column;
	border-left: 1px solid #20292f;
}
.play-head {
	display: flex;
	height: 83px;
	border-bottom: 2px solid #1b252c;
}
.corner {
	position: relative;
	width: 222px;
	color: #7d868b;
}
.corner-shape {
	position: absolute;
	inset: 0;
	width: 221px;
	height: 81px;
	fill: #50585f;
	stroke: #6d757b;
	stroke-width: 2;
}
.corner-icons, .corner-checks {
	position: relative;
	display: flex;
	align-items: center;
	justify-content: flex-end;
	gap: 18px;
	padding: 4px 13px 0 0;
	height: 40px;
}
.corner-icons .on {
	color: #e3e8ea;
}
.corner-checks {
	gap: 10px;
	padding: 5px 9px 0 0;
	font-size: 16px;
	color: #d3d9dc;
}
.corner-checks label {
	display: flex;
	align-items: center;
	gap: 4px;
}
.corner-checks input {
	appearance: none;
	width: 22px;
	height: 22px;
	margin: 0;
	border: 2px solid #aab2b6;
	border-radius: 7px;
}
.corner-checks input[type=radio] {
	width: 17px;
	height: 17px;
	border-color: #7a8388;
	border-radius: 50%;
	background: radial-gradient(#dde3e6 3px, transparent 4px);
}
.head-right {
	flex: 1;
	min-width: 0;
}
.overview {
	display: flex;
	height: 41px;
	gap: 2px;
	padding: 1px 0;
	background: #20292f;
}
.scroll-btn, .vscroll button {
	width: 38px;
	background: #535b62;
	border: 2px solid #656e74;
	color: #1f262b;
}
.scroll-btn svg {
	width: 10px;
	height: 18px;
}
.scroll-btn svg, .vscroll svg {
	fill: none;
	stroke: currentColor;
	stroke-width: 2;
}
.overview-track {
	flex: 1;
	background: #363d44;
}
.overview-map {
	width: calc(100% * 13 / 15);
	height: 39px;
	background: #50605f;
	border: 2px solid #66757a;
}
.ruler {
	position: relative;
	height: 40px;
	background: linear-gradient(#26323a, #1c272e 10px 34px, #2f3b43 37px);
}
.ruler span {
	position: absolute;
	top: 7px;
	font-size: 20px;
	line-height: 28px;
	color: #95a0a6;
}
.marker {
	position: absolute;
	left: 0;
	top: 4px;
	z-index: 1;
}
.tracks {
	flex: 1;
	min-height: 0;
	overflow: hidden;
	display: flex;
}

/* track headers */
.heads {
	width: 222px;
	background: #1b262e;
}
.group {
	display: flex;
	flex-direction: column;
	width: 211px;
	overflow: hidden;
	border-radius: 0 12px 12px 0;
	background: #29333a;
}
.track {
	display: flex;
	align-items: center;
	height: 50px;
	padding: 0 10px 0 4px;
	color: #fff;
	background: linear-gradient(rgba(255, 255, 255, .02), rgba(0, 0, 0, .03)) var(--color);
	border-left: 1px solid rgba(255, 255, 255, .15);
}
.track.child {
	margin-left: 12px;
	padding-left: 3px;
}
.track.small, .lane.small {
	height: 32px;
}
.track.small {
	font-size: 20px;
}
.parent {
	border-radius: 0 0 0 12px;
}
.name {
	flex: 1;
	padding-bottom: 4px;
	white-space: nowrap;
}
.name.long {
	font-size: 22px;
}
.small .name {
	padding-bottom: 3px;
}
.track .note { width: 20px; height: 26px; margin-right: 20px; }
.track .drum { width: 24px; height: 28px; margin-right: 18px; }
.track .spark { width: 32px; height: 24px; margin-right: 15px; }
.track.small .note { width: 15px; height: 20px; margin-right: 18px; }
.big .drum { margin-right: 14px; }
.big .spark { margin-right: 11px; }
.fold {
	width: 18px;
	height: 11px;
	margin-right: 15px;
}
.led {
	appearance: none;
	width: 22px;
	height: 22px;
	margin: 0;
	border-radius: 50%;
	border: 3px solid #183010;
	outline: 1px solid rgba(255, 255, 255, .4);
	outline-offset: -1px;
	background: linear-gradient(#8ad82f, #d8f993);
}
.track.empty {
	color: #7d868b;
}

/* lanes */
.lanes {
	flex: 1;
	min-width: 0;
	--bar: calc(100% / 103.12);
	background:
		repeating-linear-gradient(to right, #0d1e29 0 2px, transparent 2px var(--bar)),
		repeating-linear-gradient(to right, #34454f 0 calc(var(--bar) * 4), #2d3c47 calc(var(--bar) * 4) calc(var(--bar) * 8));
}
.lane {
	position: relative;
	height: 50px;
	border-bottom: 1px solid #0b1720;
	box-shadow: inset 0 -1px #1d2d37;
}
.clip {
	position: absolute;
	top: 0;
	bottom: 0;
	display: flex;
	align-items: center;
	gap: 6px;
	padding-left: 3px;
	overflow: hidden;
	border: 1px solid rgba(255, 255, 255, .1);
	border-right-color: rgba(0, 0, 0, .4);
	border-bottom-color: rgba(0, 0, 0, .4);
	border-radius: 3px;
	background: var(--fill);
	color: #dde5e8;
	font-size: 24px;
	white-space: nowrap;
	text-shadow: 2px 2px 1px rgba(0, 0, 0, .6);
}
.clip span {
	position: relative;
	padding-bottom: 4px;
}
.clip .icon {
	position: relative;
	width: 17px;
	height: 18px;
}
.clip .notes, .clip .curve, .patterns .notes {
	position: absolute;
	left: 0;
	top: 0;
	width: 100%;
	height: 100%;
	color: rgba(160, 175, 182, .24);
}
.curve {
	fill: none;
	stroke: currentColor;
}
.clip.red .curve {
	color: rgba(230, 160, 160, .28);
}
.small .clip {
	padding-left: 0;
	gap: 4px;
	font-size: 22px;
}
.small .clip .icon {
	width: 21px;
	height: 21px;
}
.small .clip.tight {
	gap: 2px;
	font-size: 20px;
}
.clip.pattern.tight {
	font-size: 22px;
}
.pattern { --fill: linear-gradient(#495257, #434c50); }
.red { --fill: linear-gradient(#7c5052, #704749); }
.rose { --fill: linear-gradient(#7f546b, #744b60); }
.blue { --fill: linear-gradient(#535b80, #495275); }
.clap { --fill: linear-gradient(#705a58, #634f4d); }
.hat { --fill: linear-gradient(#6c565a, #624e51); }
.fill-clip { --fill: linear-gradient(#6b6155, #60574b); }
.sea { --fill: linear-gradient(#586d69, #4d635e); }
.leaf { --fill: linear-gradient(#566a56, #4b604b); }
.olive { --fill: linear-gradient(#667058, #5a634d); }
.plum { --fill: linear-gradient(#60566a, #564c60); }
.tick, .ticks {
	position: absolute;
	top: 0;
	bottom: 0;
}
.tick {
	width: 1px;
	background: #8e2d30;
}
.ticks.kick {
	background: repeating-linear-gradient(to right, #9c2c2e 0 1px, transparent 1px 5px);
}
.ticks.gray {
	background: repeating-linear-gradient(to right, #6d3438 0 1px, #2f3539 1px 3px, #3b3c40 3px 6px);
}
.ticks.slate {
	background: repeating-linear-gradient(to right, #4b5458 0 2px, #2a3338 2px 4px);
}
.clap .slices {
	position: absolute;
	inset: 0;
	background:
		linear-gradient(#8d7573, #8d7573) center / 100% 1px no-repeat,
		repeating-linear-gradient(to right, transparent 0 4px, #574442 4px 6px, transparent 6px 11px, #574442 11px 12px);
}
.clap .hit {
	position: absolute;
	top: 17px;
	width: 2px;
	height: 14px;
	background: #e9e0e0;
}

/* right scrollbar */
.vscroll {
	width: 42px;
	padding: 0 1px 0 2px;
	display: flex;
	flex-direction: column;
	gap: 2px;
	background: #20292f;
}
.vscroll button {
	height: 39px;
}
.vscroll .dot {
	background: linear-gradient(#1f262b, #1f262b) center / 4px 4px no-repeat #535b62;
}
.vtrack {
	flex: 1;
	background: repeating-linear-gradient(45deg, #343b41 0 2px, #3a4147 2px 4px);
}
.vthumb {
	height: 66px;
	border: 2px solid #656e74;
	background:
		linear-gradient(#6d757b, #6d757b) 50% 27px / 14px 4px no-repeat,
		linear-gradient(#6d757b, #6d757b) 50% 35px / 14px 4px no-repeat,
		#535b62;
}
```

FILE: script.js
```js
const BARS = 103.12;

// notes of each pattern: [x, y, width] on a 64 x 16 sheet
const dots = (from, to, step, y, w) => {
	const out = [];
	for (let x = from; x < to; x += step) out.push([x, y, w]);
	return out;
};
const NOTES = {
	3: [[32, 0, 16], [48, 2, 16], [48, 10, 2], [52, 10, 2], [56, 11, 2], [12, 5, 2], [32, 6, 2], [36, 6, 2], [40, 6, 2], [44, 4, 2], [24, 11, 2], [28, 15, 2], [60, 15, 2], ...dots(2, 64, 4, 13, 2)],
	4: [...dots(0, 24, 2, 1, 1), ...dots(10, 60, 2, 4, 1), ...dots(40, 52, 2, 2, 1), [0, 14, 8], [8, 13, 8], [16, 12, 8], [24, 11, 4], [28, 15, 4], [32, 14, 8], [40, 13, 8], [48, 15, 8], [56, 11, 4], [60, 15, 4]],
	5: [[24, 0, 4], [56, 0, 4], [8, 3, 8], [16, 1, 8], [40, 3, 8], [48, 1, 8], [60, 3, 4], [0, 5, 8], [32, 5, 8], [48, 5, 8], [60, 5, 4], [0, 8, 16], [24, 8, 8], [32, 8, 8], [56, 8, 8], [16, 10, 8], [48, 10, 8], [60, 10, 4], [8, 12, 8], [40, 12, 8], [0, 13, 8], [32, 13, 8], [28, 15, 4], [60, 15, 4]],
	6: [[0, 10, 32], [32, 12, 32]],
	7: [[24, 0, 4], [56, 0, 4], [16, 4, 8], [60, 4, 4], [40, 7, 8], [0, 10, 8], [32, 10, 8], [28, 15, 4], [48, 15, 8]],
	10: [[24, 0, 1], [28, 0, 1], [56, 0, 1], [60, 0, 1], [30, 3, 1], [32, 4, 1], [6, 4, 1], [8, 8, 1], [40, 8, 1], [62, 3, 1], [14, 15, 1], [46, 15, 1], ...dots(1, 60, 2, 12, 1)],
	11: [[24, 0, 4], [16, 3, 8], [48, 3, 8], [0, 6, 8], [36, 6, 6], [8, 10, 8], [40, 9, 8], [56, 12, 6], [28, 14, 4]],
	12: [[40, 2, 4], [20, 4, 6], [0, 7, 10], [48, 7, 8], [12, 12, 6], [30, 14, 4], [56, 14, 6]],
};
NOTES[8] = NOTES[9] = NOTES[5];
NOTES[14] = [...NOTES[4].filter(n => n[1] < 10), [0, 13, 8], [8, 1, 8], [24, 11, 6], [32, 14, 8], [44, 12, 8], [56, 14, 6]];

const pat = (n, start, len, label, tight) => ({ kind: 'pattern', icon: 'keys', n, start, len, label, tight });
const auto = (kind, start, len, label, tight) => ({ kind, icon: 'autoclip', start, len, label, tight });
const audio = (kind, start, len, label) => ({ kind, icon: 'sample', start, len, label });
const every = (starts, make) => starts.map(make);
const MAIN = [29, 37, 45, 77, 85, 93];

const patternLane = n => every([5, 53], s => [pat(n, s, 8, 'Pattern ' + n), ...tail(n, s + 8)]).flat();
const tail = (n, s) => [pat(n, s, 8, 'Pattern ' + n), pat(n, s + 8, 4, 'Pa..' + n), pat(n, s + 12, 1), pat(n, s + 13, 1), pat(n, s + 14, 1)];
const pairs = (start, count) => Array.from({ length: count }, (_, i) => auto('blue', start + i * 2, 2));
const kickstart = (name, start) => [
	auto('blue', start, 29 - start, `Kickstart (${name}) – Mix level`),
	auto('blue', 53, 24, `Kickstart (${name}) – Mix level`),
	...every(MAIN, s => auto('blue', s, 8, 'Kickstart..x level', true)),
];
const fruity = (name, start, end, curve) => ({ ...auto('red', start, end - start, `Fruity Filter (${name}) – Cutoff freq`), curve });
const mains = (n, len) => every(MAIN, s => pat(n, s, len, 'Pattern ' + n));
const claps = (start, end, hits) => ({ kind: 'clap', start, len: end - start, hits, icon: 'sample' });

const GROUPS = [
	{ color: '#79a347', tracks: [['Bre..nth', 'note'], ['Break..Filter', 'note', 1]] },
	{ color: '#4944a3', tracks: [['Pad', 'note'], ['Pad Filter', 'note', 1], ['Pad Effectrix', 'note', 1], ['Pad Kickstart', 'note', 1]] },
	{ color: '#a34846', tracks: [['Bre..ass', 'note'], ['Brea..olume', 'note', 1], ['Break..ectrix', 'note', 1], ['Break..chain', 'note', 1]] },
	{ color: '#47a296', tracks: [['Claps', 'drum'], ['Claps 2', 'drum']] },
	{ color: '#475ea3', tracks: [['Chords', 'drum'], ['Chord..ectrix', 'note', 1], ['Chords Filter', 'note', 1], ['Chord..chain', 'note', 1]] },
	{ color: '#a27e47', tracks: [['Lead', 'note'], ['Lead S..chain', 'note', 1], ['Lead Filter', 'note', 1]] },
	{ color: '#a36346', tracks: [['Chords 2', 'note'], ['Chord..ectrix', 'note', 1]] },
	{ color: '#4692a2', tracks: [['Mid Bass', 'note'], ['MidBa..ectrix', 'note', 1]] },
	{ color: '#5ca245', tracks: [['Sub', 'note'], ['Sub Effectrix', 'note', 1]] },
	{ color: '#62876d', tracks: [['Kicks', 'drum']] },
	{ color: '#8a588f', tracks: [['HiHats', 'drum']] },
	{ color: '#768760', tracks: [['Fills', 'drum']] },
	{ color: '#a29745', tracks: [['FX', 'spark'], ['FX 2', 'spark'], ['FX 3', 'spark'], ['FX 4', 'spark'], ['FX 5', 'spark']] },
	{ color: '#4a5359', tracks: [['Track 34']] },
	{ color: '#4a5359', tracks: [['Track 35']] },
	{ color: '#4a5359', tracks: [['Track 36']] },
];

const LANES = [
	[pat(3, 1, 4, 'Pa..3'), pat(4, 5, 8, 'Pattern 4'), pat(14, 13, 8, 'Pattern 14'), pat(4, 53, 8, 'Pattern 4'), pat(14, 61, 8, 'Pattern 14')],
	[fruity('Insert 5', 1, 83, 'M0 14Q3 14 4 1H14Q18 1 20 29H52L60 2H66Q70 4 75 29H81')],
	[pat(6, 3, 2), ...patternLane(5)],
	[fruity('Insert 6', 1, 84, 'M0 29L5 20Q10 16 12 1H15Q18 3 20 14Q25 14 27 29H52Q60 16 64 1H68L72 14L76 29')],
	[auto('blue', 3, 10, 'Effectrix (In..Mix level', true), ...pairs(13, 4), auto('blue', 53, 8, 'Effectrix..x level', true), ...pairs(61, 4)],
	kickstart('Insert 6', 5),
	patternLane(7),
	[{ ...auto('rose', 1, 102, 'Balance – Bass NO SC – Volume'), curve: 'M0 7H20Q26 8 28 7H102' }],
	[auto('blue', 5, 8, 'Effectrix..x level', true), ...pairs(13, 4), auto('blue', 53, 8, 'Effectrix..x level', true), ...pairs(61, 4)],
	kickstart('Insert 7', 5),
	[claps(4.5, 5.45, []), claps(12.5, 21.2, [16.4]), claps(36.5, 53.2, [40.4, 42.4, 44.4, 46.4, 52.4]), claps(60.5, 69.2, [64.4, 68.4]), claps(76.5, 101.1, [78.4, 82.4, 88.4, 96.4, 98.4, 100.4])],
	[{ ticks: 'gray', start: 61, len: 8 }],
	[...tail(8, 13), pat(8, 53, 8, 'Pattern 8'), ...tail(8, 61)],
	[...pairs(13, 4), ...pairs(61, 4)],
	[fruity('Insert 8', 8, 77, 'M0 1H14Q18 6 20 16H22Q30 29 32 29H36Q42 26 45 19H50Q54 12 55 1H60Q62 14 64 16H68')],
	kickstart('Insert 8', 1),
	[...every([21, 69], s => [pat(10, s, 4, 'Pat..0', true), pat(10, s + 4, 1), pat(10, s + 5, 1), { ticks: 'slate', start: s + 6, len: 1 }]).flat(), ...mains(10, 8)],
	kickstart('Send 1', 1),
	[fruity('Send 1', 1, 29, 'M0 29L20 16Q26 10 28 1'), fruity('Send 1', 53, 77, 'M0 24L8 18Q14 2 17 1H20L24 29'), ...every(MAIN, s => auto('red', s, 8, 'Fruity Fil..ff freq', true))],
	mains(9, 7.75),
	[...pairs(29, 12), ...pairs(77, 12)],
	mains(11, 7.75),
	[...pairs(29, 12), ...pairs(77, 12)],
	mains(12, 7),
	[...pairs(29, 12), ...pairs(77, 12)],
	every(MAIN, s => ({ ticks: 'kick', start: s, len: 7 })),
	[audio('hat', 13, 16, 'Hihats'), audio('hat', 61, 16, 'Hihats'), ...every(MAIN, s => audio('hat', s, 8, 'Hihats'))],
	[audio('fill-clip', 17, 12, 'Fills'), audio('fill-clip', 69, 8, 'Fills'), ...every(MAIN, s => audio('fill-clip', s, 8, 'Fills'))],
	[audio('sea', 13, 1), audio('sea', 61, 1), ...every([37, 45, 85, 93], s => audio('sea', s + .1, 7.9, 'FX4')), ...every([29, 37, 45, 77, 85, 93], s => ({ tick: s }))],
	[audio('leaf', 21, 1), audio('leaf', 69, 1), ...every(MAIN, s => audio('leaf', s + .1, 7.9, 'Impact 04')), { tick: 1 }, { tick: 53 }],
	[...Array.from({ length: 24 }, (_, i) => audio('olive', (i < 12 ? 29 : 53) + i * 2, 1))],
	[audio('plum', 21, 8, 'FX2'), audio('plum', 69, 8, 'FX2'), { tick: 45 }, { tick: 93 }],
	[audio('plum', 9, 20, 'FX3'), audio('plum', 57, 20, 'FX3'), ...every(MAIN, s => audio('plum', s, 8, 'FX3'))],
	[], [], [],
];

const pct = bars => (bars / BARS * 100) + '%';
const icon = (id, cls) => `<svg class="${cls}"><use href="#${id}"/></svg>`;
const notes = (n, bars) => {
	const rects = (NOTES[n] || []).map(([x, y, w]) => `<rect x="${x}" y="${y}" width="${w}" height="1"/>`).join('');
	return `<svg class="notes" viewBox="0 0 ${Math.min(64, bars * 8)} 16" preserveAspectRatio="none">${rects}</svg>`;
};

function clipHtml(c) {
	if (c.tick) return `<i class="tick" style="left:${pct(c.tick - 1)}"></i>`;
	const place = `left:${pct(c.start - 1)};width:${pct(c.len)}`;
	if (c.ticks) return `<i class="ticks ${c.ticks}" style="${place}"></i>`;
	let inner = '';
	if (c.n) inner += notes(c.n, c.n === 3 || c.n === 6 ? 8 : c.len);
	let curve = c.curve;
	if (!curve && c.kind === 'blue') curve = c.len === 2 ? 'M0 29V1H1V29H2' : 'M0 29H8V1';
	if (curve) inner += `<svg class="curve" viewBox="0 0 ${c.len} 30" preserveAspectRatio="none"><path vector-effect="non-scaling-stroke" d="${curve}"/></svg>`;
	if (c.hits) {
		if (c.len > 1) inner += '<i class="slices"></i>';
		inner += c.hits.map(h => `<i class="hit" style="left:${(h - c.start) / c.len * 100}%"></i>`).join('');
	}
	inner += icon(c.icon, 'icon');
	if (c.label) inner += `<span>${c.label}</span>`;
	return `<div class="clip ${c.kind}${c.tight ? ' tight' : ''}" style="${place}">${inner}</div>`;
}

const heads = [], lanes = [];
let row = 0;
GROUPS.forEach(g => {
	let html = `<div class="group" style="--color:${g.color}">`;
	g.tracks.forEach(([name, type, small], i) => {
		const parent = i === 0 && g.tracks.length > 1;
		const long = parent && name.length > 7 && !name.includes('..');
		const cls = ['track', i ? 'child' : '', small ? 'small' : '', parent ? 'parent' : 'big', type ? '' : 'empty'].join(' ');
		html += `<div class="${cls}"><span class="name${long ? ' long' : ''}">${name}</span>`;
		if (type) html += icon(type, type);
		if (parent) html += '<svg class="fold" viewBox="0 0 18 11"><path d="M0 11L9 0l9 11z"/></svg>';
		html += `<input class="led" type="checkbox" checked aria-label="${name} on"></div>`;
		lanes.push(`<div class="lane${small ? ' small' : ''}">${LANES[row++].map(clipHtml).join('')}</div>`);
	});
	heads.push(html + '</div>');
});
document.getElementById('heads').innerHTML = heads.join('');
document.getElementById('lanes').innerHTML = lanes.join('');

// bar numbers
let numbers = '';
for (let b = 1; b <= 101; b += 4) numbers += `<span style="left:${pct(b - 1)}">${b}</span>`;
document.getElementById('ruler').insertAdjacentHTML('beforeend', numbers);

// overview of all lanes
const MAP = { pattern: '#5a6868', red: '#94706f', rose: '#94708a', blue: '#66748f', clap: '#957a6f', hat: '#947a78', 'fill-clip': '#94826f', sea: '#6f9488', leaf: '#78946f', olive: '#8a946f', plum: '#86789a' };
const map = document.getElementById('overview');
map.setAttribute('viewBox', `0 0 ${BARS} 36`);
map.innerHTML = LANES.map((l, y) => l.filter(c => c.kind).map(c =>
	`<rect x="${c.start - 1}" y="${y}" width="${c.len}" height="1" fill="${MAP[c.kind]}"/>`).join('')).join('');

// pattern list
document.getElementById('patterns').innerHTML = [3, 4, 5, 6, 7, 8, 9, 10, 11, 12, 14].map(n =>
	`<li>${notes(n, 8)}${icon('keys', 'keys')}<span>Pattern ${n}</span>${n === 12 ? '<svg class="playing" width="12" height="20" viewBox="0 0 12 20"><path d="M0 0l12 10L0 20z"/></svg>' : ''}</li>`).join('');
```
